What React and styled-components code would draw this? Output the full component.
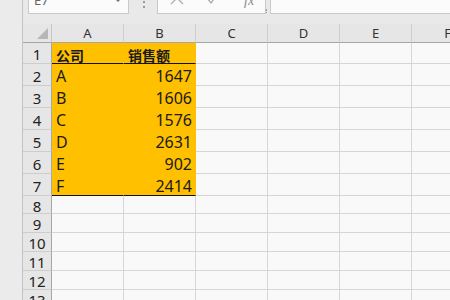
import React from 'react';
import styled, { createGlobalStyle } from 'styled-components';

const Global = createGlobalStyle`
  html, body {
    margin: 0;
    padding: 0;
    background: #f9f9f9;
  }
  * {
    box-sizing: border-box;
  }
`;

const Window = styled.div`
  display: flex;
  width: 450px;
  height: 300px;
  overflow: hidden;
  font-family: 'Noto Sans', 'Noto Sans CJK SC', sans-serif;
  background: #f9f9f9;
`;

const LeftStrip = styled.div`
  flex: 0 0 23px;
  height: 100%;
  background: #ebebeb;
  border-right: 1px solid #c3c3c3;
`;

const Main = styled.div`
  flex: 1;
  display: flex;
  flex-direction: column;
  min-width: 0;
`;

const FormulaBar = styled.div`
  height: 24px;
  flex: 0 0 24px;
  display: flex;
  align-items: flex-end;
  padding-bottom: 10px;
  background: #e9e9e9;
  overflow: hidden;
`;

const Box = styled.div`
  position: relative;
  height: 22px;
  flex: 0 0 ${(p) => p.$width}px;
  margin-left: ${(p) => p.$left}px;
  background: #fbfbfb;
  border: 1px solid #c9c9c9;
  color: #444;
  font-size: 13px;
`;

const NameText = styled.span`
  position: absolute;
  left: 5px;
  bottom: 6px;
  line-height: 14px;
  color: #666;
`;

const Arrow = styled.span`
  position: absolute;
  right: 7px;
  bottom: 11px;
  width: 0;
  height: 0;
  border-left: 3px solid transparent;
  border-right: 3px solid transparent;
  border-top: 3px solid #777;
`;

const Dots = styled.div`
  margin-left: 14px;
  width: 3px;
  display: flex;
  flex-direction: column;
  gap: 3px;
  align-self: flex-start;
  padding-top: 1px;
  & > span {
    width: 2px;
    height: 2px;
    background: #9a9a9a;
  }
`;

const Icon = styled.svg`
  position: absolute;
  bottom: 8px;
  left: ${(p) => p.$x}px;
`;

const Fx = styled.span`
  position: absolute;
  left: 86px;
  bottom: 5px;
  font-family: 'Liberation Serif', serif;
  font-style: italic;
  font-size: 14px;
  line-height: 14px;
  color: #8a8a8a;
`;

const Grip = styled.span`
  position: absolute;
  left: -5px;
  bottom: 0;
  width: 2px;
  height: 4px;
  border-left: 1px dotted #999;
`;

const Sheet = styled.div`
  display: grid;
  grid-template-columns: 29px repeat(6, 72px);
  grid-template-rows: 19px 21px repeat(6, 22px) 18px repeat(5, 19px);
`;

const Corner = styled.div`
  position: relative;
  background: #e6e6e6;
  border-bottom: 1px solid #a6a6a6;
  border-right: 1px solid #c6c6c6;
  &::after {
    content: '';
    position: absolute;
    right: 3px;
    bottom: 3px;
    width: 0;
    height: 0;
    border-left: 11px solid transparent;
    border-bottom: 11px solid #b7b7b7;
  }
`;

const ColHead = styled.div`
  background: #e6e6e6;
  border-bottom: 1px solid #a6a6a6;
  border-right: 1px solid #cfcfcf;
  color: #333;
  font-size: 13px;
  line-height: 19px;
  text-align: center;
`;

const RowHead = styled.div`
  background: #e6e6e6;
  border-right: 1px solid #a6a6a6;
  border-bottom: 1px solid #cdcdcd;
  color: #222;
  font-size: 15px;
  display: flex;
  align-items: center;
  justify-content: center;
  padding-top: 2px;
`;

const Cell = styled.div`
  background: ${(p) => (p.$fill ? '#ffc000' : '#f9f9f9')};
  border-right: 1px solid ${(p) => (p.$fill ? '#ffc000' : '#d6d6d6')};
  border-bottom: 1px solid
    ${(p) => (p.$line ? '#111' : p.$fill ? '#ffc000' : '#d6d6d6')};
  color: #1a1a1a;
  font-size: ${(p) => (p.$bold ? 14 : 16)}px;
  font-weight: ${(p) => (p.$bold ? 700 : 400)};
  display: flex;
  align-items: center;
  justify-content: ${(p) => (p.$right ? 'flex-end' : 'flex-start')};
  padding: 3px 3px 0 4px;
  white-space: nowrap;
  overflow: hidden;
`;

const columns = ['A', 'B', 'C', 'D', 'E', 'F'];

const data = [
  ['公司', '销售额'],
  ['A', 1647],
  ['B', 1606],
  ['C', 1576],
  ['D', 2631],
  ['E', 902],
  ['F', 2414],
];

const rowCount = 13;

const App = () => {
  const rows = [];
  for (let r = 1; r <= rowCount; r += 1) {
    const entry = data[r - 1];
    rows.push(<RowHead key={`h${r}`}>{r}</RowHead>);
    columns.forEach((c, i) => {
      const fill = Boolean(entry) && i < 2;
      const value = fill ? entry[i] : '';
      rows.push(
        <Cell
          key={`${c}${r}`}
          $fill={fill}
          $bold={r === 1}
          $right={fill && i === 1 && r > 1}
          $line={fill && (r === 1 || r === 7)}
        >
          {value}
        </Cell>
      );
    });
  }

  return (
    <>
      <Global />
      <Window>
        <LeftStrip />
        <Main>
          <FormulaBar>
            <Box $left={5} $width={101}>
              <NameText>E7</NameText>
              <Arrow />
            </Box>
            <Dots>
              <span />
              <span />
            </Dots>
            <Box $left={12} $width={109}>
              <Icon $x={12} width="14" height="14" viewBox="0 0 14 14">
                <path d="M1 1 L13 13 M13 1 L1 13" stroke="#a9a9a9" strokeWidth="1.2" fill="none" />
              </Icon>
              <Icon $x={48} width="14" height="14" viewBox="0 0 14 14">
                <path d="M1 7 L5 12 L13 1" stroke="#a9a9a9" strokeWidth="1.3" fill="none" />
              </Icon>
              <Fx>fx</Fx>
            </Box>
            <Box $left={4} $width={190}>
              <Grip />
            </Box>
          </FormulaBar>
          <Sheet>
            <Corner />
            {columns.map((c) => (
              <ColHead key={c}>{c}</ColHead>
            ))}
            {rows}
          </Sheet>
        </Main>
      </Window>
    </>
  );
};

export default App;
